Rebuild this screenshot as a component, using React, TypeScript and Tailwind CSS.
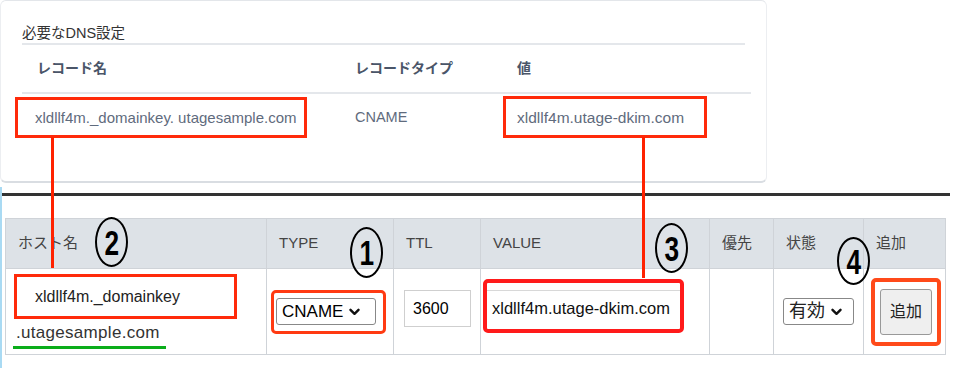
import React from "react";

const FONT = { fontFamily: '"Liberation Sans", "Noto Sans CJK JP", sans-serif' };

function Circled({ n, className }: { n: string; className: string }) {
  return (
    <div
      className={`absolute flex items-center justify-center rounded-[50%] border-[2.5px] border-black ${className}`}
    >
      <span className="scale-x-75 text-[35px] font-bold leading-none text-black">{n}</span>
    </div>
  );
}

function Chevron() {
  return (
    <svg width="11" height="8" viewBox="0 0 11 8" className="ml-[6px]">
      <path d="M1.5 1.8 L5.5 5.8 L9.5 1.8" fill="none" stroke="#111" strokeWidth="2.4" strokeLinecap="round" strokeLinejoin="round" />
    </svg>
  );
}

export default function App() {
  return (
    <div className="relative h-[368px] w-[959px] overflow-hidden bg-white" style={FONT}>
      {/* Top card */}
      <div className="h-[183px] w-[767px] rounded-b-[6px] rounded-t-[6px] border-x border-t border-b-2 border-x-[#eceef1] border-t-[#e3e6ea] border-b-[#d9dde2] px-[21px] pt-[21px]">
        <div className="h-[23px] border-b-2 border-[#e4e7eb] text-[14.5px] leading-[22px] text-[#333]">必要なDNS設定</div>
        <div className="grid h-[49px] w-[729px] grid-cols-[318px_162px_249px] items-center border-b-2 border-[#e4e7eb] text-[14px] font-semibold text-[#4a5568]">
          <div className="pl-[15px]">レコード名</div>
          <div className="pl-[15px]">レコードタイプ</div>
          <div className="pl-[15px]">値</div>
        </div>
        <div className="grid h-[48px] w-[729px] grid-cols-[318px_162px_249px] items-center text-[15px] text-[#5f6b7d]">
          <div className="pl-[13px]">xldllf4m._domainkey. utagesample.com</div>
          <div className="pl-[15px] text-[14.5px]">CNAME</div>
          <div className="pl-[15px] text-[15.5px]">xldllf4m.utage-dkim.com</div>
        </div>
      </div>

      {/* Bottom section */}
      <div className="mt-[4px] h-[181px] border-l-2 border-[#a9daf3]">
        <div className="h-[6px]" />
        <div className="h-[3px] w-[948px] bg-[#333]" />
        <div className="ml-[3px] mt-[22px] w-[941px] border-l border-t border-[#cfd3d8]">
          <div className="grid h-[50px] grid-cols-[261px_127px_87px_229px_64px_90px_82px] bg-[#dde2e7] text-[15px] text-[#444]">
            {["ホスト名", "TYPE", "TTL", "VALUE", "優先", "状態", "追加"].map((h) => (
              <div key={h} className="flex items-center border-b border-r border-[#cfd3d8] pl-[12px]">
                {h}
              </div>
            ))}
          </div>
          <div className="grid h-[86px] grid-cols-[261px_127px_87px_229px_64px_90px_82px] text-black">
            {/* host */}
            <div className="border-b border-r border-[#cfd3d8] pl-[8px] pt-[5px]">
              <div className="flex h-[45px] w-[223px] items-center border-[3px] border-[#ff2a0a] pl-[18px] text-[16px] font-medium text-[#222]">
                xldllf4m._domainkey
              </div>
              <div className="ml-[2px] mt-[3px] w-fit text-[17px] leading-[22px] tracking-[0.3px] text-[#333]">.utagesample.com</div>
              <div className="-ml-[1px] mt-[2px] h-[3px] w-[153px] bg-[#0aad1a]" />
            </div>
            {/* type */}
            <div className="flex items-center border-b border-r border-[#cfd3d8] pl-[4px]">
              <div className="flex h-[44px] w-[115px] items-center rounded-[5px] border-[3px] border-[#ff3a12] pl-[2px]">
                <div className="flex h-[27px] w-[100px] items-center rounded-[3px] border border-[#888] bg-white pl-[5px] text-[17px]">
                  CNAME
                  <Chevron />
                </div>
              </div>
            </div>
            {/* ttl */}
            <div className="flex items-center border-b border-r border-[#cfd3d8] pb-[6px] pl-[10px]">
              <div className="flex h-[37px] w-[67px] items-center border border-[#cfcfcf] pl-[8px] text-[16px]">3600</div>
            </div>
            {/* value */}
            <div className="flex items-start border-b border-r border-[#cfd3d8] pl-[2px] pt-[10px]">
              <div className="h-[54px] w-[201px] rounded-[5px] border-[4px] border-[#ff1a1a] bg-white">
                <div className="mt-[7px] flex h-[36px] items-center border-t border-[#d8d8d8] pl-[5px] text-[16.5px] font-medium text-[#111]">
                  xldllf4m.utage-dkim.com
                </div>
              </div>
            </div>
            {/* priority */}
            <div className="border-b border-r border-[#cfd3d8]" />
            {/* status */}
            <div className="flex items-center border-b border-r border-[#cfd3d8] pl-[9px]">
              <div className="flex h-[27px] w-[71px] items-center rounded-[3px] border border-[#888] pl-[5px] text-[18px] text-[#222]">
                有効
                <Chevron />
              </div>
            </div>
            {/* add */}
            <div className="flex items-center border-b border-r border-[#cfd3d8] pl-[7px]">
              <div className="flex h-[68px] w-[70px] items-center justify-center rounded-[5px] border-[4px] border-[#ff4a1a]">
                <div className="flex h-[46px] w-[52px] items-center justify-center rounded-[3px] border border-[#999] bg-[#efefef] text-[16px] text-[#222]">
                  追加
                </div>
              </div>
            </div>
          </div>
        </div>
      </div>

      {/* Overlay annotations */}
      <div className="absolute left-[15px] top-[97px] h-[41px] w-[292px] border-[3px] border-[#ff2a0a]" />
      <div className="absolute left-[503px] top-[96px] h-[42px] w-[204px] border-[3px] border-[#ff2a0a]" />
      <div className="absolute left-[51px] top-[137px] h-[131px] w-[3px] bg-[#ff2200]" />
      <div className="absolute left-[642px] top-[137px] h-[141px] w-[3px] bg-[#ff2200]" />

      <Circled n="2" className="left-[95px] top-[217px] h-[50px] w-[33px]" />
      <Circled n="1" className="left-[350px] top-[227px] h-[51px] w-[33px]" />
      <Circled n="3" className="left-[655px] top-[223px] h-[50px] w-[33px]" />
      <Circled n="4" className="left-[837px] top-[237px] h-[48px] w-[33px]" />
    </div>
  );
}
